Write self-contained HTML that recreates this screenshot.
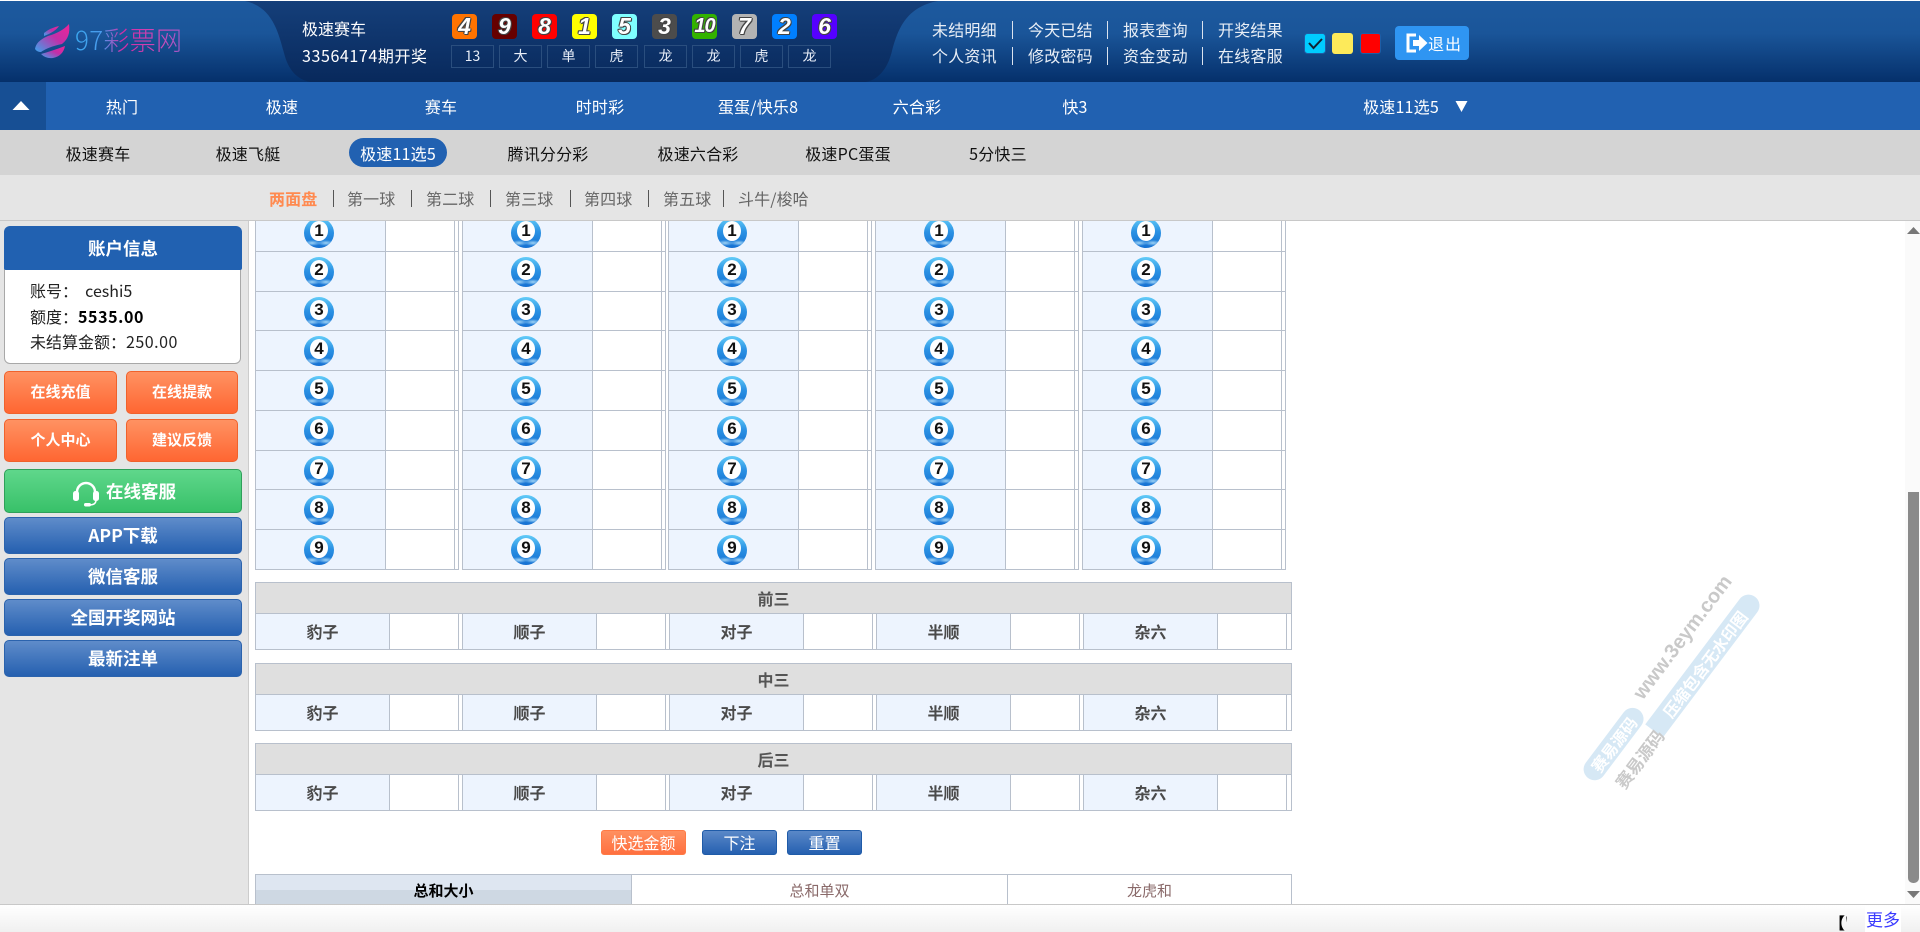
<!DOCTYPE html>
<html lang="zh">
<head>
<meta charset="utf-8">
<title>97彩票网</title>
<style>
*{box-sizing:border-box;margin:0;padding:0}
html,body{width:1920px;height:932px;overflow:hidden;background:#fff}
body{position:relative;font-family:"Noto Sans CJK SC","Liberation Sans",sans-serif;font-size:16px;color:#222}
.a{position:absolute;white-space:nowrap}
.c{position:absolute;white-space:nowrap;transform:translateX(-50%)}
#top{position:absolute;left:0;top:1px;width:1920px;height:81px;background:linear-gradient(#1d5a9f,#1a5599 40%,#05306b)}
#top svg.bg{position:absolute;left:0;top:0}
.w{color:#fff;line-height:22px}
.n{position:absolute;top:14px;width:25px;height:25px;border-radius:4px;font:italic bold 23px/25px "Liberation Sans",sans-serif;text-align:center;color:#fff;text-shadow:-1px 0 #444,1px 0 #444,0 -1px #444,0 1px #444,1px 1px #444,-1px -1px #444}
.rb{position:absolute;top:45px;width:43px;height:23px;border:1px solid #2a4e7e;color:#e8eef8;font-size:14px;line-height:20px;text-align:center}
.sep{position:absolute;width:1px;background:#dbe3ee;height:18px}
#nav{position:absolute;left:0;top:82px;width:1920px;height:48px;background:#2161b1}
#tg{position:absolute;left:0;top:82px;width:46px;height:48px;background:#174f94}
#sub{position:absolute;left:0;top:130px;width:1920px;height:45px;background:#d4d4d4}
#tabs{position:absolute;left:0;top:175px;width:1920px;height:46px;background:#e5e5e5;border-bottom:1px solid #c8c8c8}
.nt{color:#fff;top:94px;line-height:24px;letter-spacing:.2px}
.st{color:#111;top:141px;line-height:24px;letter-spacing:.2px}
.tt{color:#666;top:186px;line-height:24px;letter-spacing:.1px}
.ts{position:absolute;top:190px;width:1px;height:17px;background:#555}
#side{position:absolute;left:0;top:221px;width:249px;height:684px;background:#e5e5e5;border-right:1px solid #ccc}
.o{position:absolute;height:43px;border:1px solid #f0622c;border-radius:5px;background:linear-gradient(#ff9262,#ff6632);color:#fff;font-weight:700;font-size:15px;line-height:40px;text-align:center}
.bl{position:absolute;left:4px;width:238px;height:37px;border:1px solid #2b63ad;border-radius:5px;background:linear-gradient(#5f8cca,#2560b0);color:#fff;font-weight:700;font-size:17.5px;line-height:35px;text-align:center}
.g{position:absolute;top:221px;width:204px;height:349px;overflow:hidden;border-left:1px solid #b8c0cc;border-right:1px solid #b8c0cc}
.r{position:relative;height:40px;border-bottom:1px solid #b8c0cc;background:linear-gradient(90deg,#edf4fe 129px,#b8c0cc 129px,#b8c0cc 130px,#fff 130px,#fff 198px,#b8c0cc 198px,#b8c0cc 199px,#fff 199px)}
.r1{height:31px}.r3,.r7{height:39px}
.b{position:absolute;left:48px;top:5px;width:30px;height:30px;border-radius:50%;background:radial-gradient(ellipse 9px 3px at 8px 25px,#9fd3f5,transparent),radial-gradient(ellipse 9px 3px at 22px 25px,#9fd3f5,transparent),linear-gradient(#62ccf8,#2b92e4 45%,#1570d2)}
.r1 .b{top:-3px}
.b i{position:absolute;left:6px;top:3px;width:18px;height:20px;border-radius:50%;background:#fff;font:bold 17px/20px "Liberation Sans",sans-serif;text-align:center;color:#111}
.h{position:absolute;left:255px;width:1037px;height:32px;background:#dfdfdf;border:1px solid #b8c0cc;color:#555;font-weight:700;font-size:16px;line-height:30px;text-align:center}
.ro{position:absolute;left:255px;width:1037px;height:36px;border:1px solid #b8c0cc;border-top:0;display:flex;background:linear-gradient(90deg,#edf4fe 133px,#b8c0cc 133px,#b8c0cc 134px,#fff 134px,#fff 202px,#b8c0cc 202px,#b8c0cc 203px,#fff 203px,#fff 206px,#b8c0cc 206px,#b8c0cc 207px) 0 0/207px 100%}
.ro::after{content:"";position:absolute;right:0;top:0;width:3px;height:100%;background:#fff}
.ro span{display:block;width:133px;margin-right:74px;text-align:center;font-weight:700;font-size:16px;line-height:34px;color:#4a4a4a}
.btn{position:absolute;top:830px;height:25px;border-radius:3px;color:#fff;font-size:16px;line-height:23px;text-align:center}
.bb{border:1px solid #1f5ba8;background:linear-gradient(#5a88c8,#2560b0)}
.wm{position:absolute;transform-origin:0 50%;transform:rotate(-53deg);white-space:nowrap}
</style>
</head>
<body>
<div id="top">
<svg class="bg" width="1920" height="81" viewBox="0 0 1920 81">
<defs><linearGradient id="mid" x1="0" y1="0" x2="0" y2="1"><stop offset="0" stop-color="#153f7a"/><stop offset="1" stop-color="#08295c"/></linearGradient>
<linearGradient id="lg" x1="0" y1="1" x2="1" y2="0"><stop offset="0" stop-color="#3aa4ee"/><stop offset=".55" stop-color="#c22fa8"/><stop offset="1" stop-color="#ee2598"/></linearGradient></defs>
<path d="M245 0C272 6 278 30 284 52C288 68 296 78 310 81H866C880 78 888 66 892 50C898 28 906 6 938 0Z" fill="url(#mid)"/>
<g fill="url(#lg)"><path d="M44 32Q50 27 59 25Q55 31 44 35Z"/><path d="M35 48Q36 40 48 35Q62 31 69 23Q71 36 62 43Q48 46 41 51Q37 51 35 48Z"/><path d="M41 53Q52 50 65 45Q63 55 53 57Q46 58 41 53Z"/></g>
</svg>
</div>
<div class="a" style="left:75px;top:22px;font-size:26px;line-height:36px;letter-spacing:.3px;font-weight:300;background:linear-gradient(90deg,#3aa8f0 0,#4a9aec 25%,#d42ca5 45%,#cc4ab8 80%,#9a5ac8 100%);-webkit-background-clip:text;background-clip:text;color:transparent">97彩票网</div>

<div class="a w" style="left:302px;top:17px">极速赛车</div>
<div class="a w" style="left:302px;top:44px;letter-spacing:.6px">33564174期开奖</div>

<div class="n" style="left:452px;background:#ff7300">4</div>
<div class="n" style="left:492px;background:#660000">9</div>
<div class="n" style="left:532px;background:#ff0000">8</div>
<div class="n" style="left:572px;background:#ffff00">1</div>
<div class="n" style="left:612px;background:#7fffff">5</div>
<div class="n" style="left:652px;background:#4c4c4c">3</div>
<div class="n" style="left:692px;background:#33b300;font-size:20px;letter-spacing:-1px">10</div>
<div class="n" style="left:732px;background:#b3b3b3">7</div>
<div class="n" style="left:772px;background:#007fff">2</div>
<div class="n" style="left:812px;background:#5500ff">6</div>

<div class="rb" style="left:451px">13</div>
<div class="rb" style="left:499px">大</div>
<div class="rb" style="left:547px">单</div>
<div class="rb" style="left:595px">虎</div>
<div class="rb" style="left:644px">龙</div>
<div class="rb" style="left:692px">龙</div>
<div class="rb" style="left:740px">虎</div>
<div class="rb" style="left:788px">龙</div>

<div class="a w" style="left:932px;top:18px;color:#e8eef6;letter-spacing:.2px">未结明细</div>
<div class="a w" style="left:1028px;top:18px;color:#e8eef6;letter-spacing:.2px">今天已结</div>
<div class="a w" style="left:1123px;top:18px;color:#e8eef6;letter-spacing:.2px">报表查询</div>
<div class="a w" style="left:1218px;top:18px;color:#e8eef6;letter-spacing:.2px">开奖结果</div>
<div class="a w" style="left:932px;top:44px;color:#e8eef6;letter-spacing:.2px">个人资讯</div>
<div class="a w" style="left:1028px;top:44px;color:#e8eef6;letter-spacing:.2px">修改密码</div>
<div class="a w" style="left:1123px;top:44px;color:#e8eef6;letter-spacing:.2px">资金变动</div>
<div class="a w" style="left:1218px;top:44px;color:#e8eef6;letter-spacing:.2px">在线客服</div>
<div class="sep" style="left:1012px;top:21px"></div><div class="sep" style="left:1107px;top:21px"></div><div class="sep" style="left:1202px;top:21px"></div>
<div class="sep" style="left:1012px;top:47px"></div><div class="sep" style="left:1107px;top:47px"></div><div class="sep" style="left:1202px;top:47px"></div>

<svg class="a" style="left:1304px;top:33px" width="22" height="21" viewBox="0 0 22 21"><rect x=".5" y=".5" width="21" height="20" rx="3" fill="#00ccff" stroke="#1e5ea6"/><path d="M5 10l4.500 5L18 6" fill="none" stroke="#123" stroke-width="2"/></svg>
<div class="a" style="left:1332px;top:33px;width:21px;height:21px;border-radius:3px;background:#fdea5a"></div>
<div class="a" style="left:1360px;top:33px;width:21px;height:21px;border-radius:3px;background:#ff0000;border:1px solid #1e5ea6"></div>
<div class="a" style="left:1395px;top:26px;width:74px;height:34px;border-radius:4px;background:#2f95f2"></div>
<svg class="a" style="left:1406px;top:33px" width="22" height="20" viewBox="0 0 22 20"><path d="M10 2H2V18H10" fill="none" stroke="#fff" stroke-width="3"/><path d="M7 7H13V2L21.500 10L13 18V13H7Z" fill="#fff"/></svg>
<div class="a w" style="left:1428px;top:32px;letter-spacing:1px">退出</div>

<div id="nav"></div>
<div id="tg"></div>
<svg class="a" style="left:12px;top:101px" width="18" height="10" viewBox="0 0 18 10"><path d="M9 0L17.500 9H.5Z" fill="#fff"/></svg>
<div class="c nt" style="left:122px">热门</div>
<div class="c nt" style="left:282px">极速</div>
<div class="c nt" style="left:441px">赛车</div>
<div class="c nt" style="left:600px">时时彩</div>
<div class="c nt" style="left:758px">蛋蛋/快乐8</div>
<div class="c nt" style="left:917px">六合彩</div>
<div class="c nt" style="left:1075px">快3</div>
<div class="c nt" style="left:1401px">极速11选5</div>
<svg class="a" style="left:1455px;top:100px" width="13" height="13" viewBox="0 0 13 13"><path d="M.5 1H12.500L6.500 12Z" fill="#fff"/></svg>

<div id="sub"></div>
<div class="a" style="left:349px;top:138px;width:98px;height:29px;border-radius:15px;background:#2161b1"></div>
<div class="c st" style="left:98px">极速赛车</div>
<div class="c st" style="left:248px">极速飞艇</div>
<div class="c st" style="left:398px;color:#fff">极速11选5</div>
<div class="c st" style="left:548px">腾讯分分彩</div>
<div class="c st" style="left:698px">极速六合彩</div>
<div class="c st" style="left:848px">极速PC蛋蛋</div>
<div class="c st" style="left:998px">5分快三</div>

<div id="tabs"></div>
<div class="a tt" style="left:269px;color:#ff8a50;font-weight:700">两面盘</div>
<div class="ts" style="left:333px"></div>
<div class="a tt" style="left:347px">第一球</div>
<div class="ts" style="left:411px"></div>
<div class="a tt" style="left:426px">第二球</div>
<div class="ts" style="left:490px"></div>
<div class="a tt" style="left:505px">第三球</div>
<div class="ts" style="left:570px"></div>
<div class="a tt" style="left:584px">第四球</div>
<div class="ts" style="left:648px"></div>
<div class="a tt" style="left:663px">第五球</div>
<div class="ts" style="left:723px"></div>
<div class="a tt" style="left:738px">斗牛/梭哈</div>

<div id="side"></div>
<div class="a" style="left:4px;top:262px;width:237px;height:102px;background:#fff;border:1px solid #a8a8a8;border-radius:0 0 6px 6px"></div>
<div class="a" style="left:4px;top:226px;width:238px;height:44px;background:#2161b1;border-radius:6px 6px 2px 2px;color:#fff;font-weight:700;font-size:17.5px;line-height:46px;text-align:center">账户信息</div>
<div class="a" style="left:30px;top:278px;line-height:24px;color:#222">账号：&nbsp; ceshi5</div>
<div class="a" style="left:30px;top:304px;line-height:24px;color:#222">额度：<b style="color:#000;letter-spacing:.6px">5535.00</b></div>
<div class="a" style="left:30px;top:329px;line-height:24px;color:#222">未结算金额：<span style="letter-spacing:.5px">250.00</span></div>
<div class="o" style="left:4px;top:371px;width:113px">在线充值</div>
<div class="o" style="left:126px;top:371px;width:112px">在线提款</div>
<div class="o" style="left:4px;top:419px;width:113px">个人中心</div>
<div class="o" style="left:126px;top:419px;width:112px">建议反馈</div>
<div class="a" style="left:4px;top:469px;width:238px;height:44px;border:1px solid #2fa05a;border-radius:5px;background:linear-gradient(#5fd78b,#38c169)"></div>
<svg class="a" style="left:73px;top:480px" width="26" height="27" viewBox="0 0 26 27"><path d="M4 15V12a9 9 0 0 1 18 0v3" fill="none" stroke="#fff" stroke-width="2.500"/><rect x="0" y="11" width="6" height="10" rx="2.500" fill="#fff"/><rect x="20" y="11" width="6" height="10" rx="2.500" fill="#fff"/><path d="M23 20q0 5-7 5" fill="none" stroke="#fff" stroke-width="1.500"/><rect x="11" y="23" width="7" height="3.500" rx="1.700" fill="#fff"/></svg>
<div class="a" style="left:106px;top:479px;color:#fff;font-weight:700;font-size:17.5px;line-height:26px">在线客服</div>
<div class="bl" style="top:517px">APP下载</div>
<div class="bl" style="top:558px">微信客服</div>
<div class="bl" style="top:599px">全国开奖网站</div>
<div class="bl" style="top:640px">最新注单</div>

<div class="g" style="left:255px"><div class="r r1"><b class="b"><i>1</i></b></div><div class="r"><b class="b"><i>2</i></b></div><div class="r r3"><b class="b"><i>3</i></b></div><div class="r"><b class="b"><i>4</i></b></div><div class="r"><b class="b"><i>5</i></b></div><div class="r"><b class="b"><i>6</i></b></div><div class="r r7"><b class="b"><i>7</i></b></div><div class="r"><b class="b"><i>8</i></b></div><div class="r"><b class="b"><i>9</i></b></div></div>
<div class="g" style="left:462px"><div class="r r1"><b class="b"><i>1</i></b></div><div class="r"><b class="b"><i>2</i></b></div><div class="r r3"><b class="b"><i>3</i></b></div><div class="r"><b class="b"><i>4</i></b></div><div class="r"><b class="b"><i>5</i></b></div><div class="r"><b class="b"><i>6</i></b></div><div class="r r7"><b class="b"><i>7</i></b></div><div class="r"><b class="b"><i>8</i></b></div><div class="r"><b class="b"><i>9</i></b></div></div>
<div class="g" style="left:668px"><div class="r r1"><b class="b"><i>1</i></b></div><div class="r"><b class="b"><i>2</i></b></div><div class="r r3"><b class="b"><i>3</i></b></div><div class="r"><b class="b"><i>4</i></b></div><div class="r"><b class="b"><i>5</i></b></div><div class="r"><b class="b"><i>6</i></b></div><div class="r r7"><b class="b"><i>7</i></b></div><div class="r"><b class="b"><i>8</i></b></div><div class="r"><b class="b"><i>9</i></b></div></div>
<div class="g" style="left:875px"><div class="r r1"><b class="b"><i>1</i></b></div><div class="r"><b class="b"><i>2</i></b></div><div class="r r3"><b class="b"><i>3</i></b></div><div class="r"><b class="b"><i>4</i></b></div><div class="r"><b class="b"><i>5</i></b></div><div class="r"><b class="b"><i>6</i></b></div><div class="r r7"><b class="b"><i>7</i></b></div><div class="r"><b class="b"><i>8</i></b></div><div class="r"><b class="b"><i>9</i></b></div></div>
<div class="g" style="left:1082px"><div class="r r1"><b class="b"><i>1</i></b></div><div class="r"><b class="b"><i>2</i></b></div><div class="r r3"><b class="b"><i>3</i></b></div><div class="r"><b class="b"><i>4</i></b></div><div class="r"><b class="b"><i>5</i></b></div><div class="r"><b class="b"><i>6</i></b></div><div class="r r7"><b class="b"><i>7</i></b></div><div class="r"><b class="b"><i>8</i></b></div><div class="r"><b class="b"><i>9</i></b></div></div>

<div class="h" style="top:582px">前三</div>
<div class="ro" style="top:614px"><span>豹子</span><span>顺子</span><span>对子</span><span>半顺</span><span>杂六</span></div>
<div class="h" style="top:663px">中三</div>
<div class="ro" style="top:695px"><span>豹子</span><span>顺子</span><span>对子</span><span>半顺</span><span>杂六</span></div>
<div class="h" style="top:743px">后三</div>
<div class="ro" style="top:775px"><span>豹子</span><span>顺子</span><span>对子</span><span>半顺</span><span>杂六</span></div>

<div class="btn" style="left:601px;width:85px;border:1px solid #ff7a45;background:linear-gradient(#ff9060,#ff7040)">快选金额</div>
<div class="btn bb" style="left:702px;width:75px">下注</div>
<div class="btn bb" style="left:787px;width:75px">重置</div>

<div class="a" style="left:255px;top:874px;width:377px;height:31px;border:1px solid #b8c0cc;border-bottom:0;background:linear-gradient(#dee6f1 50%,#ced8e3 50%);text-align:center;font-size:15px;font-weight:700;line-height:32px;color:#000">总和大小</div>
<div class="a" style="left:632px;top:874px;width:376px;height:31px;border-top:1px solid #b8c0cc;border-right:1px solid #b8c0cc;text-align:center;font-size:15px;line-height:32px;color:#8a6a6a">总和单双</div>
<div class="a" style="left:1008px;top:874px;width:284px;height:31px;border-top:1px solid #b8c0cc;border-right:1px solid #b8c0cc;text-align:center;font-size:15px;line-height:32px;color:#8a6a6a">龙虎和</div>

<div class="wm" style="left:1588px;top:767px;width:85px;height:22px;border-radius:11px;background:#d6e8f5;color:#fff;font-weight:700;font-size:16px;line-height:22px;text-align:center">赛易源码</div>
<div class="wm" style="left:1654px;top:720px;width:168px;height:22px;border-radius:0 11px 11px 0;background:#d6e8f5;color:#fff;font-weight:700;font-size:16px;line-height:22px;text-align:center">压缩包含无水印图</div>
<div class="wm" style="left:1638px;top:686px;color:#c9c9c9;font:bold 20px/22px 'Liberation Sans',sans-serif">www.3eym.com</div>
<div class="wm" style="left:1619px;top:775px;color:#c9c9c9;font-weight:700;font-size:17px;line-height:22px">赛易源码</div>

<div class="a" style="left:1905px;top:221px;width:15px;height:684px;background:#fafafa"></div>
<svg class="a" style="left:1907px;top:227px" width="13" height="8" viewBox="0 0 13 8"><path d="M6.500 0L13 7H0Z" fill="#777"/></svg>
<div class="a" style="left:1908px;top:492px;width:11px;height:391px;border-radius:0 0 5px 5px;background:#8a8a8a"></div>
<svg class="a" style="left:1907px;top:891px" width="13" height="8" viewBox="0 0 13 8"><path d="M0 0H13L6.500 7Z" fill="#777"/></svg>

<div class="a" style="left:0;top:904px;width:1920px;height:28px;border-top:1px solid #c8c8c8;background:linear-gradient(#fff,#f0f0f0)"></div>
<div class="a" style="left:1829px;top:911px;font-weight:700;line-height:22px;color:#000;width:18px;overflow:hidden">【'</div>
<div class="a" style="left:1865px;top:906px;width:36px;height:26px;background:#fff;color:#3b3bff;text-align:center;line-height:26px;font-size:17px">更多</div>
</body>
</html>
